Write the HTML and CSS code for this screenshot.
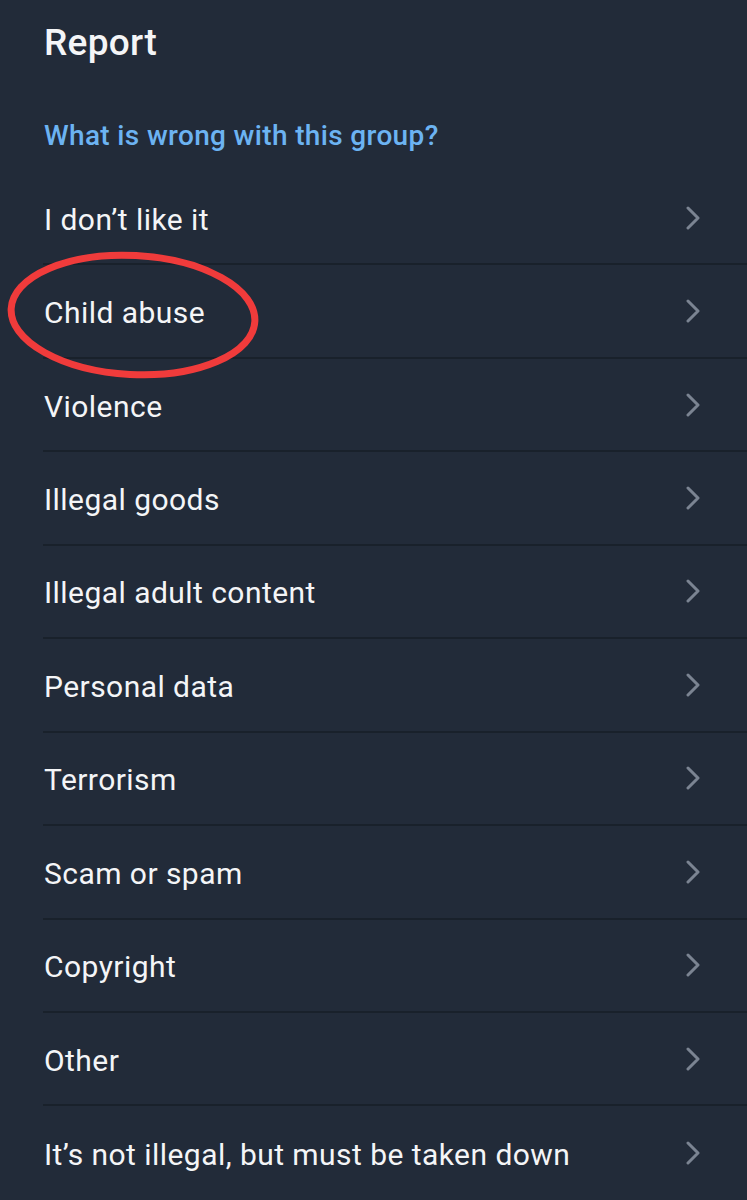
FILE: index.html
```html
<!DOCTYPE html>
<html lang="en">
<head>
<meta charset="utf-8">
<title>Report</title>
<link rel="stylesheet" href="styles.css">
</head>
<body>
<div class="screen">
  <header class="header">
    <h1 class="title">Report</h1>
    <h2 class="subtitle">What is wrong with this group?</h2>
  </header>
  <ul class="list">
    <li class="row"><span class="label">I don’t like it</span><svg class="chev" viewBox="0 0 14 24"><path d="M2 2 L12 12 L2 22"/></svg></li>
    <li class="row"><span class="label">Child abuse</span><svg class="chev" viewBox="0 0 14 24"><path d="M2 2 L12 12 L2 22"/></svg></li>
    <li class="row"><span class="label">Violence</span><svg class="chev" viewBox="0 0 14 24"><path d="M2 2 L12 12 L2 22"/></svg></li>
    <li class="row"><span class="label">Illegal goods</span><svg class="chev" viewBox="0 0 14 24"><path d="M2 2 L12 12 L2 22"/></svg></li>
    <li class="row"><span class="label">Illegal adult content</span><svg class="chev" viewBox="0 0 14 24"><path d="M2 2 L12 12 L2 22"/></svg></li>
    <li class="row"><span class="label">Personal data</span><svg class="chev" viewBox="0 0 14 24"><path d="M2 2 L12 12 L2 22"/></svg></li>
    <li class="row"><span class="label">Terrorism</span><svg class="chev" viewBox="0 0 14 24"><path d="M2 2 L12 12 L2 22"/></svg></li>
    <li class="row"><span class="label">Scam or spam</span><svg class="chev" viewBox="0 0 14 24"><path d="M2 2 L12 12 L2 22"/></svg></li>
    <li class="row"><span class="label">Copyright</span><svg class="chev" viewBox="0 0 14 24"><path d="M2 2 L12 12 L2 22"/></svg></li>
    <li class="row"><span class="label">Other</span><svg class="chev" viewBox="0 0 14 24"><path d="M2 2 L12 12 L2 22"/></svg></li>
    <li class="row"><span class="label">It’s not illegal, but must be taken down</span><svg class="chev" viewBox="0 0 14 24"><path d="M2 2 L12 12 L2 22"/></svg></li>
  </ul>
  <svg class="circle" viewBox="0 0 270 140" aria-hidden="true">
    <ellipse cx="133" cy="70" rx="122" ry="59.5" transform="rotate(3 133 70)"/>
  </svg>
</div>
</body>
</html>
```

FILE: styles.css
```css
html, body {
  margin: 0;
  padding: 0;
  background: #222b39;
}

.screen {
  position: relative;
  width: 747px;
  height: 1200px;
  overflow: hidden;
  background: #222b39;
  font-family: Roboto, "Liberation Sans", sans-serif;
  color: #f4f5f7;
}

.header {
  box-sizing: border-box;
  height: 172px;
  padding: 21px 0 0 44px;
}

.title {
  margin: 0;
  font-size: 37px;
  line-height: 44px;
  font-weight: 500;
  letter-spacing: 0.3px;
  color: #f4f5f7;
}

.subtitle {
  margin: 51px 0 0 0;
  font-size: 28px;
  line-height: 40px;
  font-weight: 500;
  letter-spacing: 0.35px;
  color: #6cb3f2;
}

.list {
  list-style: none;
  margin: 0 0 0 43px;
  padding: 0;
}

.row {
  box-sizing: border-box;
  height: 93.44px;
  display: flex;
  align-items: center;
  justify-content: space-between;
  padding: 0 47px 0 1px;
  border-bottom: 2px solid #19212b;
}

.row:last-child {
  border-bottom: none;
}

.label {
  font-size: 30px;
  font-weight: 400;
  line-height: 34px;
  letter-spacing: 0.45px;
  color: #f4f5f7;
  position: relative;
  top: 2px;
}

.chev {
  width: 14px;
  height: 24px;
  flex: none;
}

.chev path {
  fill: none;
  stroke: #7b8492;
  stroke-width: 3;
  stroke-linecap: round;
  stroke-linejoin: round;
}

.circle {
  position: absolute;
  left: 0;
  top: 245px;
  width: 270px;
  height: 140px;
}

.circle ellipse {
  fill: none;
  stroke: #f03b3b;
  stroke-width: 7;
}
```
